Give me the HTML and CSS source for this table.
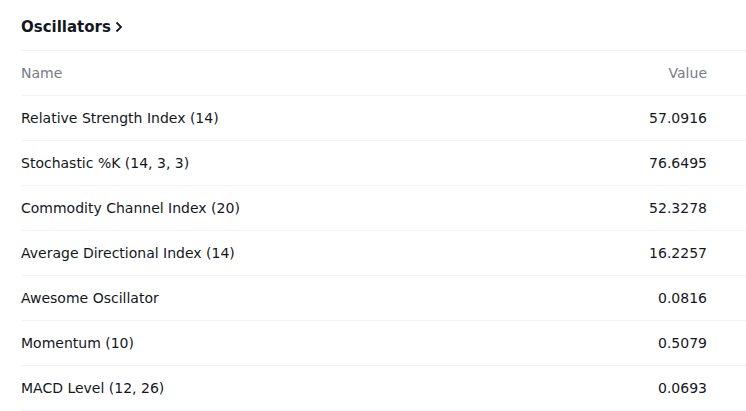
FILE: index.html
```html
<!DOCTYPE html>
<html>
<head>
<meta charset="utf-8">
<link rel="stylesheet" href="styles.css">
</head>
<body>
<div class="panel">
  <div class="title">Oscillators <svg class="chev" width="8" height="12" viewBox="0 0 8 12"><path d="M1.5 1.5 L6 6 L1.5 10.5" fill="none" stroke="#131722" stroke-width="1.8"/></svg></div>
  <div class="row head"><span>Name</span><span>Value</span></div>
  <div class="row"><span>Relative Strength Index (14)</span><span>57.0916</span></div>
  <div class="row"><span>Stochastic %K (14, 3, 3)</span><span>76.6495</span></div>
  <div class="row"><span>Commodity Channel Index (20)</span><span>52.3278</span></div>
  <div class="row"><span>Average Directional Index (14)</span><span>16.2257</span></div>
  <div class="row"><span>Awesome Oscillator</span><span>0.0816</span></div>
  <div class="row"><span>Momentum (10)</span><span>0.5079</span></div>
  <div class="row"><span>MACD Level (12, 26)</span><span>0.0693</span></div>
</div>
</body>
</html>
```
FILE: styles.css
```css
html, body { margin: 0; padding: 0; background: #fff; }
body { font-family: "DejaVu Sans", sans-serif; color: #131722; }
.panel { padding-left: 21px; }
.title {
  height: 51px; box-sizing: border-box;
  display: flex; align-items: center;
  padding-top: 3px;
  font-size: 15px; font-weight: 700;
  border-bottom: 1px solid #f0f3fa;
}
.chev { margin-left: 4px; }
.row {
  height: 45px; box-sizing: border-box;
  display: flex; align-items: center; justify-content: space-between;
  padding-right: 39px; font-size: 14px;
  border-bottom: 1px solid #f0f3fa;
}
.row.head { color: #787b86; }
```
